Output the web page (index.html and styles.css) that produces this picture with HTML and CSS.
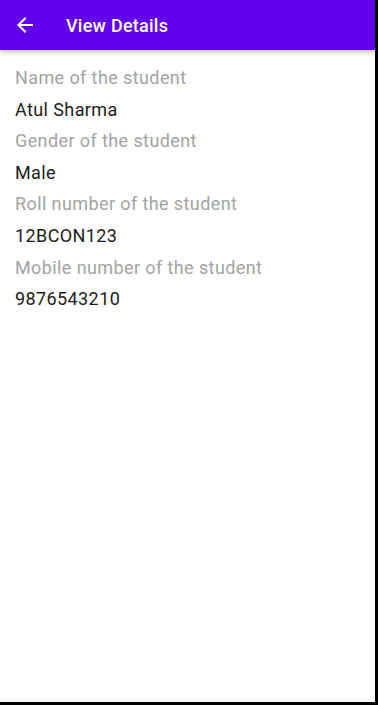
FILE: index.html
```html
<!DOCTYPE html>
<html lang="en">
<head>
    <meta charset="UTF-8">
    <meta name="viewport" content="width=device-width, initial-scale=1.0">
    <title>View Details</title>
    <link rel="stylesheet" href="styles.css">
</head>
<body>
    <div class="screen">
        <div class="app-bar">
            <button class="back-button" aria-label="Back">
                <svg width="24" height="24" viewBox="0 0 24 24">
                    <path d="M20 11H7.83l5.59-5.59L12 4l-8 8 8 8 1.41-1.41L7.83 13H20v-2z" fill="#ffffff"/>
                </svg>
            </button>
            <h1 class="title">View Details</h1>
        </div>

        <div class="details">
            <p class="label">Name of the student</p>
            <p class="value">Atul Sharma</p>
            <p class="label">Gender of the student</p>
            <p class="value">Male</p>
            <p class="label">Roll number of the student</p>
            <p class="value">12BCON123</p>
            <p class="label">Mobile number of the student</p>
            <p class="value">9876543210</p>
        </div>
    </div>
</body>
</html>
```

FILE: styles.css
```css
html, body {
    margin: 0;
    height: 100%;
}
body {
    font-family: Roboto, "Noto Sans", Arial, sans-serif;
    background-color: #000000;
}
.screen {
    width: 375px;
    height: 702px;
    background: white;
    overflow: hidden;
}
.app-bar {
    display: flex;
    align-items: center;
    height: 50px;
    padding: 0 16px 0 13px;
    background-color: #6200EE; /* Purple 500 */
    box-shadow: 0 2px 4px rgba(0, 0, 0, 0.25);
}
.back-button {
    display: flex;
    padding: 0;
    border: none;
    background: none;
    cursor: pointer;
}
.title {
    margin: 0 0 0 29px;
    font-size: 18px;
    font-weight: 500;
    letter-spacing: 0.25px;
    color: white;
}
.details {
    padding: 12px 15px;
}
.details p {
    margin: 0;
    font-size: 18px;
    letter-spacing: 0.4px;
    line-height: 31.6px;
}
.label {
    color: #a3a3a3;
}
.value {
    color: #1c1c1c;
}
```
